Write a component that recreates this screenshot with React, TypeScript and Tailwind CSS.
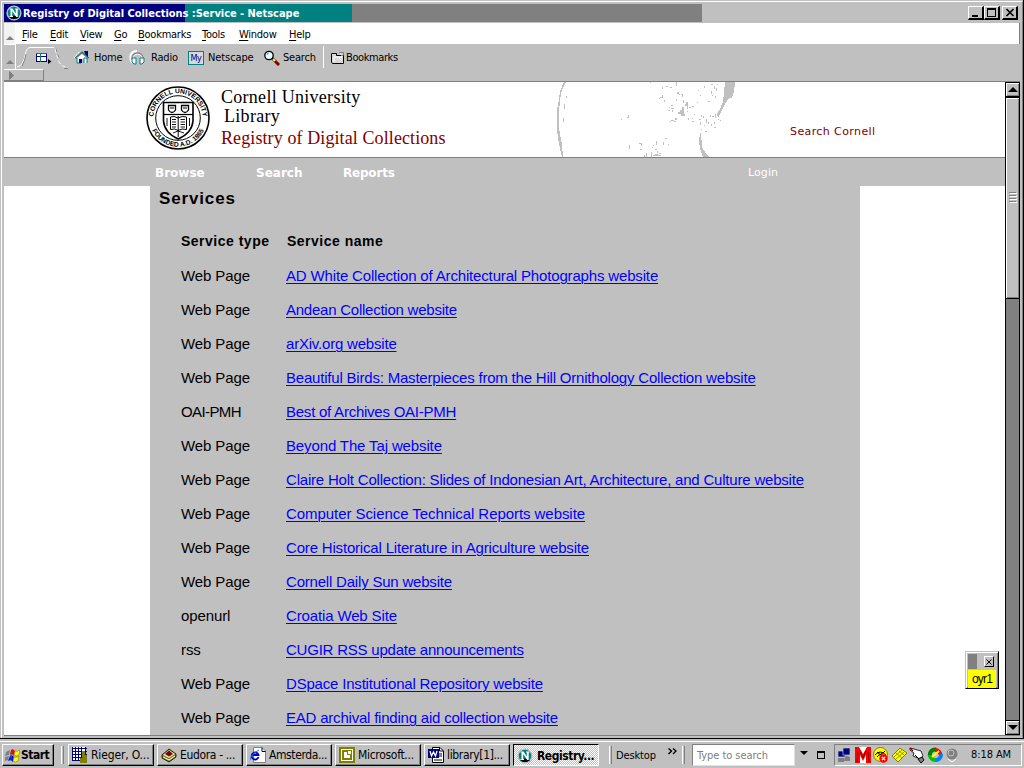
import type { ReactNode } from "react";

const tahoma = "font-['DejaVu_Sans_Condensed','DejaVu_Sans',sans-serif]";

const menus = [
  { label: "File", cls: "w-[28px]" },
  { label: "Edit", cls: "w-[30px]" },
  { label: "View", cls: "w-[34px]" },
  { label: "Go", cls: "w-[24px]" },
  { label: "Bookmarks", cls: "w-[64px]" },
  { label: "Tools", cls: "w-[37px]" },
  { label: "Window", cls: "w-[50px]" },
  { label: "Help", cls: "w-[30px]" },
];

const services = [
  { kind: "Web Page", name: "AD White Collection of Architectural Photographs website", cls: "tracking-[-0.16px]" },
  { kind: "Web Page", name: "Andean Collection website", cls: "tracking-[-0.24px]" },
  { kind: "Web Page", name: "arXiv.org website", cls: "tracking-[-0.2px]" },
  { kind: "Web Page", name: "Beautiful Birds: Masterpieces from the Hill Ornithology Collection website", cls: "tracking-[-0.2px]" },
  { kind: "OAI-PMH", name: "Best of Archives OAI-PMH", cls: "tracking-[-0.24px]" },
  { kind: "Web Page", name: "Beyond The Taj website", cls: "tracking-[-0.13px]" },
  { kind: "Web Page", name: "Claire Holt Collection: Slides of Indonesian Art, Architecture, and Culture website", cls: "tracking-[-0.2px]" },
  { kind: "Web Page", name: "Computer Science Technical Reports website", cls: "tracking-[-0.06px]" },
  { kind: "Web Page", name: "Core Historical Literature in Agriculture website", cls: "tracking-[-0.18px]" },
  { kind: "Web Page", name: "Cornell Daily Sun website", cls: "tracking-[-0.2px]" },
  { kind: "openurl", name: "Croatia Web Site", cls: "tracking-[-0.14px]" },
  { kind: "rss", name: "CUGIR RSS update announcements", cls: "tracking-[-0.22px]" },
  { kind: "Web Page", name: "DSpace Institutional Repository website", cls: "tracking-[-0.19px]" },
  { kind: "Web Page", name: "EAD archival finding aid collection website", cls: "tracking-[-0.21px]" },
];

function NetscapeIcon() {
  return (
    <svg width="16" height="16" viewBox="0 0 16 16" className="shrink-0">
      <circle cx="8" cy="8" r="7.6" fill="#c0c0c0" />
      <circle cx="8" cy="8" r="6.2" fill="#008080" />
      <path d="M3 12.2Q8 9.5 13 12.2Q8 16 3 12.2Z" fill="#000" />
      <path d="M3.5 3.5H6.5L9.8 8.6V4.5H9V3.5H12.5V4.5H11.7V12H10.2L6.2 6V11H7V12H3.5V11H4.5V4.5H3.5Z" fill="#fff" />
    </svg>
  );
}

function WinButton({ children, cls }: { children: ReactNode; cls: string }) {
  return (
    <div className={`h-[14px] shrink-0 border-t border-l border-r-2 border-b-2 border-t-white border-l-white border-r-black border-b-black bg-[#c0c0c0] ${cls}`}>
      {children}
    </div>
  );
}

function TitleBar() {
  return (
    <div className="flex h-[18px] items-stretch">
      <div className="flex w-[348px] items-center gap-[1px] bg-[linear-gradient(to_right,#000080_181px,#008080_181px)] pl-[2px]">
        <NetscapeIcon />
        <span className="whitespace-pre pt-px font-['DejaVu_Sans_Condensed','DejaVu_Sans',sans-serif] text-[11px] leading-[18px] font-bold tracking-[-0.03px] text-white">
          Registry of Digital Collections :Service - Netscape
        </span>
      </div>
      <div className="w-[350px] bg-[#808080]" />
      <div className="flex flex-1 items-start justify-end pt-[2px] pr-[2px]">
        <WinButton cls="w-[16px]">
          <svg width="13" height="11" shapeRendering="crispEdges"><rect x="3" y="8" width="6" height="2" /></svg>
        </WinButton>
        <WinButton cls="w-[16px]">
          <svg width="13" height="11" shapeRendering="crispEdges"><path d="M2 1H11V10H2ZM3 3V9H10V3Z" fillRule="evenodd" /></svg>
        </WinButton>
        <WinButton cls="ml-[2px] w-[16px]">
          <svg width="13" height="11"><path d="M3.5 2L10.5 9M10.5 2L3.5 9" stroke="#000" strokeWidth="1.6" /></svg>
        </WinButton>
      </div>
    </div>
  );
}

function Grip({ cls }: { cls: string }) {
  return (
    <div className={`flex w-[12px] shrink-0 items-end justify-center border-r border-r-white pb-[4px] ${cls}`}>
      <svg width="8" height="4"><path d="M0 4L4 0L8 4Z" fill="#808080" /></svg>
    </div>
  );
}

function MenuBar() {
  return (
    <div className={`flex h-[21px] border-r border-[#808080] bg-white ${tahoma}`}>
      <Grip cls="mr-[6px] bg-[#f2f2f2] border-r-[#c0c0c0]" />
      {menus.map((m) => (
        <span key={m.label} className={`shrink-0 whitespace-nowrap text-[11px] leading-[23px] tracking-[-0.25px] text-black ${m.cls}`}>
          <span className="underline underline-offset-[2px]">{m.label[0]}</span>
          {m.label.slice(1)}
        </span>
      ))}
    </div>
  );
}

function ToolBar() {
  return (
    <div className={`h-[37px] bg-[#c0c0c0] text-[11px] tracking-[-0.2px] text-black ${tahoma}`}>
      <div className="flex h-[25px]">
        <Grip cls="border-t border-t-white pb-[5px]" />
        <svg width="58" height="25" className="shrink-0" fill="none">
          <path d="M1 23Q7 22 9 12Q10 4 14 3.5H38" stroke="#fff" />
          <path d="M6 22Q9 17 10 10" stroke="#808080" />
          <path d="M39 5L42 15Q44 23 52 23.5" stroke="#fff" strokeDasharray="4 2" />
          <path d="M40 5L43 14" stroke="#808080" strokeDasharray="3 3" />
          <path d="M48 24.5H52" stroke="#808080" />
          <g shapeRendering="crispEdges">
            <rect x="20" y="9" width="10" height="8" fill="#fff" />
            <path d="M20.5 9.5H30.5V17.5H20.5ZM20 12.5H31M24.5 12V18" stroke="#000080" />
            <path d="M20 9.5H31M24.5 10V18" stroke="#008080" />
          </g>
          <path d="M32 15L35.5 17.5L32 20Z" fill="#000" />
        </svg>
        <div className="-ml-px flex w-[56px] shrink-0 items-center pt-[3px]">
          <svg width="21" height="16" viewBox="3 0 21 16" className="shrink-0">
            <path d="M4 8L8 3L11 2" fill="none" stroke="#fff" strokeDasharray="2 1" />
            <path d="M5 8L12 1L19 8L17 9L12 4L7 9Z" fill="#808080" />
            <path d="M7 8L12 4L17 8V13H14V9H11V13H7Z" fill="#fff" />
            <path d="M5 8L12 2L19 8M14 13V8H17V13M7 8V13H11" fill="none" stroke="#008080" strokeWidth="1" />
            <path d="M14 1H18V7L15 4ZM9 9H12V13H9Z" fill="#000080" />
          </svg>
          <span className="pt-px">Home</span>
        </div>
        <div className="flex w-[59px] shrink-0 items-center pt-[3px]">
          <svg width="20" height="16" viewBox="0 0 20 16" className="shrink-0">
            <path d="M3 13C-1 5 3 1 8 1" fill="none" stroke="#fff" strokeWidth="2" />
            <path d="M3 9C3 1 14 1 14 9" fill="none" stroke="#808080" strokeWidth="1.6" />
            <path d="M4 8C4 3 13 3 13 8" fill="none" stroke="#fff" />
            <path d="M3 8H7V14H5L3 12ZM11 8H15V12L13 14H11Z" fill="#fff" stroke="#008080" />
          </svg>
          <span className="ml-[2px] pt-px">Radio</span>
        </div>
        <div className="flex w-[75px] shrink-0 items-center pt-[3px]">
          <span className="flex h-[14px] w-[16px] shrink-0 items-center justify-center border border-[#008080] bg-[#d8d8d8] text-[9px] leading-none tracking-[-0.5px] text-[#000080]">My</span>
          <span className="ml-[4px] pt-px tracking-[-0.1px]">Netscape</span>
        </div>
        <div className="flex w-[60px] shrink-0 items-center pt-[3px]">
          <svg width="18" height="16" viewBox="0 0 18 16" className="shrink-0">
            <circle cx="6" cy="5.5" r="4.2" fill="#e8ffff" stroke="#000" strokeWidth="1.3" />
            <path d="M4 5A2 2 0 0 1 6 3" stroke="#808080" fill="none" />
            <path d="M9 8L12 11" stroke="#000" strokeWidth="2.5" />
            <path d="M10 9L13 12" stroke="#ffff00" strokeWidth="2" />
            <path d="M12 11L16 15" stroke="#800000" strokeWidth="3" />
          </svg>
          <span className="ml-[2px] pt-px">Search</span>
        </div>
        <div className="mt-[2px] h-[22px] w-px bg-white" />
        <div className="flex shrink-0 items-center pt-[3px] pl-[7px]">
          <svg width="14" height="14" viewBox="0 0 14 14" className="shrink-0">
            <path d="M.5 2.5H5.5V4.5H12.5V12.5H1.5L.5 11Z" fill="#d8d8d8" stroke="#000" />
            <path d="M3 11V6H11V4L9 2.5M8 7L11 10" fill="none" stroke="#fff" />
            <path d="M8 1.5H12.5V4" fill="none" stroke="#808080" />
          </svg>
          <span className="ml-[1px] pt-px tracking-[-0.4px]">Bookmarks</span>
        </div>
      </div>
      <div className="flex h-[12px] w-[40px] items-center border-t border-r border-b border-t-white border-r-[#808080] border-b-[#808080] pl-[5px]">
        <svg width="5" height="9"><path d="M.5 .5L4.5 4.5L.5 8.5Z" fill="#808080" stroke="#808080" /></svg>
      </div>
    </div>
  );
}

function Seal() {
  return (
    <svg width="64" height="66" viewBox="0 0 64 66" className="shrink-0" fill="none" stroke="#000">
      <defs>
        <path id="sealTop" d="M7.3 33A24.7 24.7 0 0 1 56.7 33" />
        <path id="sealBottom" d="M3.3 33A28.7 28.7 0 0 0 60.7 33" />
      </defs>
      <circle cx="32" cy="33" r="31" strokeWidth="1.6" />
      <circle cx="32" cy="33" r="22.3" />
      <g stroke="none" fill="#000" fontFamily="Liberation Sans" fontSize="6.7" fontWeight="700" textAnchor="middle">
        <text><textPath href="#sealTop" startOffset="50%">CORNELL UNIVERSITY</textPath></text>
        <text><textPath href="#sealBottom" startOffset="50%">FOUNDED A.D. 1865</textPath></text>
      </g>
      <path d="M17.5 17.5H47V36Q46 48 32.2 54Q18.5 48 17.5 36Z" fill="#fff" strokeWidth="1.6" />
      <path d="M17 29.5H47" strokeWidth="1.2" />
      <path d="M22.5 20.5H29.5V25Q28 27.5 26 27.5Q24 27.5 22.5 25ZM35.5 20.5H42.5V25Q41 27.5 39 27.5Q37 27.5 35.5 25Z" strokeWidth="1.3" />
      <path d="M24 23H28M37 23H41" />
      <path d="M24.5 32V44.5Q29 43 32 45.5Q36 43 40.5 44.5V32Q36 30.5 32 33Q28 30.5 24.5 32ZM32.2 31V52" />
      <path d="M26 34.5H30M26 37H30M26 39.5H30M26 42H30M34.5 34.5H39M34.5 37H39M34.5 39.5H39M34.5 42H39" strokeWidth=".9" />
      <path d="M21 33V41M43.5 33V41M27 48L32 46L38 48" strokeWidth=".9" />
    </svg>
  );
}

const specks: number[][] = [
  [70, 0, 1, 1], [-14, 14, 1, 2], [-16, 22, 1, 5], [-17, 36, 1, 4],
  [96, 0, 1, 4], [86, 4, 2, 1], [82, 5, 1, 2], [90, 5, 2, 1], [97, 10, 2, 2], [99, 12, 1, 1], [101, 12, 2, 1], [102, 13, 1, 2],
  [82, 13, 1, 3], [80, 15, 2, 1], [79, 16, 1, 1], [84, 18, 1, 2], [96, 17, 1, 2], [103, 18, 1, 3], [106, 20, 2, 2], [105, 22, 3, 2], [107, 24, 1, 3],
  [91, 23, 2, 1], [89, 25, 1, 1], [91, 26, 3, 1], [88, 28, 2, 1], [92, 28, 1, 2], [102, 25, 2, 3], [100, 28, 4, 2], [98, 30, 6, 2], [101, 32, 4, 2], [107, 29, 1, 1],
  [112, 24, 2, 1], [109, 25, 2, 1], [91, 38, 3, 1], [95, 36, 2, 2], [94, 39, 2, 1], [90, 39, 1, 1],
  [118, 8, 1, 1], [124, 4, 1, 2], [131, 2, 2, 1], [134, 4, 1, 3], [137, 2, 1, 1], [120, 13, 1, 1], [117, 20, 1, 1], [131, 9, 1, 3], [136, 6, 1, 3], [128, 19, 2, 1], [132, 13, 1, 1], [135, 14, 1, 2],
  [41, 37, 1, 1], [47, 35, 2, 1], [48, 33, 1, 2], [108, 36, 1, 2], [112, 36, 1, 1], [112, 39, 2, 1], [114, 32, 1, 1], [119, 37, 2, 1], [120, 40, 1, 3], [121, 33, 1, 2], [123, 34, 1, 2],
  [124, 43, 1, 1], [126, 37, 1, 4], [130, 33, 1, 2], [132, 34, 2, 1], [135, 32, 1, 4], [131, 42, 1, 2], [134, 40, 1, 2], [134, 45, 2, 1], [121, 47, 1, 1], [125, 49, 2, 1], [138, 37, 1, 1], [140, 38, 1, 1], [128, 40, 1, 2],
  [49, 63, 1, 4], [59, 61, 3, 1], [61, 62, 1, 2], [60, 67, 2, 1], [76, 59, 1, 4], [72, 65, 1, 1], [73, 63, 1, 1], [85, 56, 2, 1], [83, 60, 1, 3], [88, 62, 1, 1],
  [64, 73, 1, 2], [66, 71, 1, 4], [71, 70, 1, 5], [77, 69, 1, 2], [75, 72, 3, 1], [73, 73, 8, 1], [79, 71, 2, 1], [75, 67, 2, 1],
];

function Globe() {
  return (
    <svg width="180" height="75" className="shrink-0" fill="#c0c0c0" shapeRendering="crispEdges">
      <path d="M10 0H8L4 9L3 18L1 28V48L3 62L6 75H7L6 62L4 52L3 46V30L4 18L6 8Z" />
      <g transform="translate(24 0)">
        <path d="M145 0H155L154 10L152 16H149L145 22L142 28L138 36L137 32L140 27L143 20L144 10Z" />
        <path d="M120 51H121L122 65L125 70L129 75H123L120 66L119 59Z" />
        {specks.map(([x, y, w, h], i) => (
          <rect key={i} x={x} y={y} width={w} height={h} />
        ))}
      </g>
    </svg>
  );
}

function PageHeader() {
  return (
    <div className="flex h-[76px] shrink-0 border-b border-[#808080] bg-white pl-[142px]">
      <div className="pt-[3px]"><Seal /></div>
      <div className="w-[346px] pt-[5px] pl-[11px] font-['Liberation_Serif',serif] text-[18px] whitespace-nowrap text-black">
        <div className="h-[19px] leading-[21px] tracking-[0.28px]">Cornell University</div>
        <div className="h-[22px] pl-[3px] leading-[21px] tracking-[0.3px]">Library</div>
        <div className="leading-[21px] tracking-[0.1px] text-[#800000]">Registry of Digital Collections</div>
      </div>
      <Globe />
      <div className="ml-[54px] pt-[42px] font-['DejaVu_Sans',sans-serif] text-[11px] leading-[16px] tracking-[0.4px] text-[#800000]">Search Cornell</div>
    </div>
  );
}

function PageBody() {
  return (
    <div className="flex min-w-0 flex-1 flex-col overflow-hidden bg-white">
      <PageHeader />
      <div className="flex h-[28px] shrink-0 bg-[#c0c0c0] pl-[151px] font-['DejaVu_Sans',sans-serif] text-[12px] leading-[30px] font-bold text-white">
        <span className="w-[101px]">Browse</span>
        <span className="w-[87px]">Search</span>
        <span className="w-[405px] tracking-[-0.2px]">Reports</span>
        <span className="text-[11px] leading-[29px] font-normal tracking-[0.1px]">Login</span>
      </div>
      <div className="ml-[146px] w-[710px] flex-1 overflow-hidden bg-[#c0c0c0] pl-[8px] font-['Liberation_Sans',sans-serif] text-black">
        <div className="h-[38px] pl-px text-[17px] leading-[25px] font-bold tracking-[0.85px]">Services</div>
        <div className="flex h-[35px] pl-[23px] text-[14px] leading-[34px] font-bold tracking-[0.5px]">
          <span className="w-[106px]">Service type</span>
          <span>Service name</span>
        </div>
        {services.map(({ kind, name, cls }) => (
          <div key={name} className="flex h-[34px] pl-[23px] text-[15px] leading-[34px] whitespace-nowrap">
            <span className={kind === "OAI-PMH" ? "w-[105px] shrink-0 tracking-[-0.6px]" : "w-[105px] shrink-0 tracking-[-0.1px]"}>{kind}</span>
            <a className={`text-[#0000ff] underline decoration-1 underline-offset-[2px] ${cls}`}>{name}</a>
          </div>
        ))}
      </div>
    </div>
  );
}

function ScrollBar() {
  return (
    <div className="flex w-[15px] shrink-0 flex-col border-r border-l border-black bg-[#808080]">
      <div className="flex h-[15px] items-center justify-center border-t border-b border-black bg-[#c0c0c0] shadow-[inset_1px_1px_#fff,inset_-1px_-1px_#808080]">
        <svg width="10" height="5"><path d="M0 5L5 0L10 5Z" /></svg>
      </div>
      <div className="flex h-[202px] items-center justify-center border-t border-b border-black bg-[#c0c0c0] shadow-[inset_1px_1px_#fff,inset_-1px_-1px_#808080]">
        <svg width="8" height="12" shapeRendering="crispEdges"><path d="M0 .5H7M0 3.5H7M0 6.5H7M0 9.5H7" stroke="#808080" /><path d="M1 1.5H8M1 4.5H8M1 7.5H8M1 10.5H8" stroke="#fff" /></svg>
      </div>
      <div className="flex-1" />
      <div className="flex h-[15px] items-center justify-center border-t border-b border-black bg-[#c0c0c0] shadow-[inset_1px_1px_#fff,inset_-1px_-1px_#808080]">
        <svg width="10" height="5"><path d="M0 0H10L5 5Z" /></svg>
      </div>
    </div>
  );
}

function StickyWidget() {
  return (
    <div className="absolute top-[651px] left-[965px] flex h-[38px] w-[34px] flex-col border border-r-black border-b-black border-t-[#c0c0c0] border-l-[#c0c0c0] bg-[#c0c0c0] p-[2px] shadow-[inset_1px_1px_#fff,inset_-1px_-1px_#808080]">
      <div className="flex h-[16px] shrink-0 justify-between pr-[2px]">
        <div className="h-[15px] w-[9px] bg-[#808080]" />
        <div className="mt-[2px] flex h-[11px] w-[10px] items-center justify-center border border-t-white border-l-white border-r-black border-b-black">
          <svg width="6" height="6"><path d="M.5 .5L5.5 5.5M5.5 .5L.5 5.5" stroke="#000" /></svg>
        </div>
      </div>
      <div className="flex-1 bg-[#ffff00] text-center font-['Liberation_Sans',sans-serif] text-[12px] leading-[18px] tracking-[-0.8px] text-black">oyr1</div>
    </div>
  );
}

function TaskButton({ icon, label, cls }: { icon: ReactNode; label: string; cls: string }) {
  return (
    <div className={`mr-[3px] flex h-[22px] w-[86px] shrink-0 items-center gap-[3px] border border-t-white border-l-white border-r-black border-b-black pl-[3px] whitespace-nowrap shadow-[inset_-1px_-1px_#808080] ${cls}`}>
      {icon}
      <span>{label}</span>
    </div>
  );
}

function Separator({ cls }: { cls: string }) {
  return <div className={`h-[18px] w-[3px] shrink-0 border-l border-r border-l-white border-r-[#808080] ${cls}`} />;
}

function TrayIcons() {
  return (
    <svg width="124" height="16" className="shrink-0">
      <path d="M1 11H7V15H1ZM8 8L13 10V14H7Z" fill="#808080" />
      <g fill="#000080" stroke="#c0c0c0" strokeWidth=".7"><rect x="1" y="4" width="7" height="6" /><rect x="6" y="1" width="7" height="7" /></g>
      <path d="M18 0H34V16H18Z" fill="#fff" />
      <path d="M18 0H22L26 7L30 0H34V16H29V8L26 14L23 8V16H18Z" fill="#ff0000" />
      <path d="M23 4L26 11L29 4M20 15L21 5M32 15L31 5" fill="none" stroke="#800000" />
      <circle cx="43.5" cy="7.5" r="7" fill="#ffff00" stroke="#808000" />
      <path d="M38 8Q43 2 49 8M40 10Q44 5 47 10M40 5Q43 10 48 4" fill="none" stroke="#000" />
      <circle cx="46.5" cy="11.5" r="4.2" fill="#ff0000" /><path d="M44.8 9.8L48.2 13.2M48.2 9.8L44.8 13.2" stroke="#fff" strokeWidth="1.2" />
      <path d="M55 9L63 1L70 6L61 15Z" fill="#ffff00" stroke="#808000" />
      <path d="M57 10L65 3M59 12L67 5M59 6L65 11M62 4L67 8" stroke="#808000" strokeWidth=".8" />
      <path d="M73 1L77 2L84 4L86 9L83 12L76 9L77 6L73 3Z" fill="#fff" stroke="#000" strokeWidth=".8" />
      <path d="M73 1L76 4" stroke="#800000" strokeWidth="1.2" /><path d="M81 12L85 10L87 13L84 16ZM78 8L81 11" stroke="#000" fill="#808080" />
      <g fill="none" strokeWidth="4">
        <path d="M93 9A5.3 5.3 0 0 1 99 2.5" stroke="#008000" />
        <path d="M98 3A5.3 5.3 0 0 1 103.5 8" stroke="#ff0000" />
        <path d="M104 7A5.3 5.3 0 0 1 98 13" stroke="#0080ff" />
        <path d="M99 13A5.3 5.3 0 0 1 93 8" stroke="#00c000" />
      </g>
      <path d="M95 10L102 4" stroke="#ffff00" strokeWidth="2" />
      <circle cx="115" cy="7" r="5.5" fill="#808080" /><circle cx="114" cy="6" r="3" fill="none" stroke="#c0c0c0" />
      <path d="M111 12L115 15L119 12" fill="none" stroke="#fff" />
    </svg>
  );
}

function TaskBar() {
  return (
    <div className={`flex h-[27px] shrink-0 items-start border-t border-white bg-[#c0c0c0] pt-[2px] pl-[2px] text-[12px] tracking-[-0.1px] text-black ${tahoma}`}>
      <div className="flex h-[22px] w-[52px] shrink-0 items-center gap-[1px] border border-t-white border-l-white border-r-black border-b-black pl-[2px] text-[12px] font-bold tracking-[-0.5px] shadow-[inset_-1px_-1px_#808080]">
        <svg width="15" height="15" viewBox="0 0 15 15" className="shrink-0">
          <path d="M1 4L5 2L4 7L0 8ZM0 9L4 8L3 12L0 13Z" fill="#808080" />
          <path d="M6 2Q8 0 10 3L9 8Q7 5 5 7Z" fill="#ff0000" />
          <path d="M10 3Q12 4 15 2L14 7Q11 9 9 7Z" fill="#ffff00" stroke="#808000" strokeWidth=".6" />
          <path d="M5 8Q7 6 9 9L8 14Q6 11 3 13Z" fill="#0000ff" />
          <path d="M9 9Q11 10 14 8L13 13Q10 15 8 13Z" fill="#ffff00" stroke="#808000" strokeWidth=".6" />
          <path d="M6 4V12" stroke="#008080" />
        </svg>
        Start
      </div>
      <Separator cls="mt-[2px] mr-[4px] ml-[7px]" />
      <TaskButton label="Rieger, O..." cls="tracking-[-0.15px]" icon={
        <svg width="16" height="16" className="shrink-0" shapeRendering="crispEdges">
          <rect width="14" height="14" fill="#fff" /><path d="M0 1H15M0 4.5H15M0 7.5H15M0 10.5H12M0 13.5H12M.5 0V14M3.5 0V14M6.5 0V14M9.5 0V14M13.5 0V8" stroke="#000080" fill="none" />
          <path d="M10 4H13V8H15V16H8V11H10Z" fill="#808000" />
        </svg>
      } />
      <TaskButton label="Eudora - ..." cls="tracking-[-0.35px]" icon={
        <svg width="16" height="16" className="shrink-0">
          <path d="M1 8L8 2L15 7V10L8 15L1 11Z" fill="#808000" stroke="#000" strokeWidth=".8" />
          <path d="M2 8L8 3L14 7L8 11Z" fill="#e0e0e0" /><path d="M4 7L8 3.5L12 7L8 9.5Z" fill="#800000" /><path d="M2 10L8 13L14 9" fill="none" stroke="#fff" />
        </svg>
      } />
      <TaskButton label="Amsterda..." cls="tracking-[-0.4px]" icon={
        <svg width="16" height="16" className="shrink-0">
          <path d="M3.5 .5H12L15.5 4V15.5H3.5Z" fill="#fff" stroke="#808080" /><path d="M12 .5V4.5H15.5" fill="none" stroke="#000" />
          <path d="M8.5 10A3.5 3.5 0 1 1 8.5 8H2" fill="none" stroke="#0000c0" strokeWidth="1.8" /><path d="M0 13Q0 8 9 3" fill="none" stroke="#0080ff" />
        </svg>
      } />
      <TaskButton label="Microsoft..." cls="tracking-[-0.3px]" icon={
        <svg width="16" height="16" className="shrink-0" shapeRendering="crispEdges">
          <rect width="16" height="16" fill="#808000" /><rect x="2.5" y="2.5" width="11" height="11" fill="#808000" stroke="#fff" />
          <path d="M5 5H8V8H11V11H5Z" fill="#fff" /><path d="M9 4H12V7H9Z" fill="#fff" />
        </svg>
      } />
      <TaskButton label="library[1]..." cls="tracking-[-0.35px]" icon={
        <svg width="16" height="16" className="shrink-0">
          <path d="M4.5 .5H12L15.5 4V15.5H4.5Z" fill="#fff" stroke="#000" /><path d="M11.5 0V4H15M11 7H14M11 9H14M6 13H14" fill="none" stroke="#000" />
          <rect x="0" y="2" width="11" height="9" fill="#000080" /><path d="M2 4L3.5 9L5.5 5L7.5 9L9 4" stroke="#fff" strokeWidth="1.3" fill="none" />
        </svg>
      } />
      <div className="flex h-[22px] w-[86px] shrink-0 items-center gap-[4px] border border-t-black border-l-black border-r-white border-b-white bg-[conic-gradient(#fff_25%,#c0c0c0_0_50%,#fff_0_75%,#c0c0c0_0)] bg-[length:2px_2px] pt-px pl-[3px] text-[12px] font-bold tracking-[-0.45px] whitespace-nowrap">
        <NetscapeIcon />
        <span>Registry...</span>
      </div>
      <Separator cls="mt-[2px] mr-[4px] ml-[10px]" />
      <span className="w-[52px] text-[11px] leading-[23px] tracking-[-0.15px]">Desktop</span>
      <svg width="9" height="7" className="mt-[4px]" fill="none" stroke="#000" strokeWidth="1.4"><path d="M.5 .5L3.5 3L.5 6M5 .5L8 3L5 6" /></svg>
      <Separator cls="mt-[2px] mr-[7px] ml-[5px]" />
      <div className="h-[22px] w-[103px] shrink-0 border border-t-[#808080] border-l-[#808080] border-r-[#e0e0e0] border-b-[#e0e0e0] bg-white pl-[4px] text-[11px] leading-[21px] tracking-[-0.05px] text-[#808080]">Type to search</div>
      <svg width="30" height="22" className="ml-[5px] shrink-0"><path d="M0 7H8L4 11Z" /><path d="M17.5 7.5H24.5V14.5H17.5ZM17 8.5H25" fill="none" stroke="#000" shapeRendering="crispEdges" /></svg>
      <div className="ml-[4px] flex h-[22px] w-[188px] shrink-0 items-center justify-between border border-t-[#808080] border-l-[#808080] border-r-white border-b-white pr-[10px] pl-[2px] text-[11px] whitespace-nowrap">
        <TrayIcons />
        <span className="pt-px">8:18 AM</span>
      </div>
    </div>
  );
}

export default function App() {
  return (
    <div className="relative flex h-[768px] w-[1024px] flex-col overflow-hidden bg-[#c0c0c0]">
      <div className="flex h-[739px] shrink-0 flex-col border-r border-b border-black pt-px">
        <div className="ml-px flex min-h-0 flex-1 flex-col border-t border-r border-b border-l border-t-white border-l-white border-r-[#808080] border-b-[#c0c0c0] pt-[2px] pr-[2px] pb-[1px] pl-[2px]">
          <TitleBar />
          <div className="h-px shrink-0" />
          <MenuBar />
          <ToolBar />
          <div className="flex min-h-0 flex-1 border-t border-b border-[#808080]">
            <PageBody />
            <ScrollBar />
          </div>
        </div>
      </div>
      <div className="h-[2px] shrink-0" />
      <TaskBar />
      <StickyWidget />
    </div>
  );
}
